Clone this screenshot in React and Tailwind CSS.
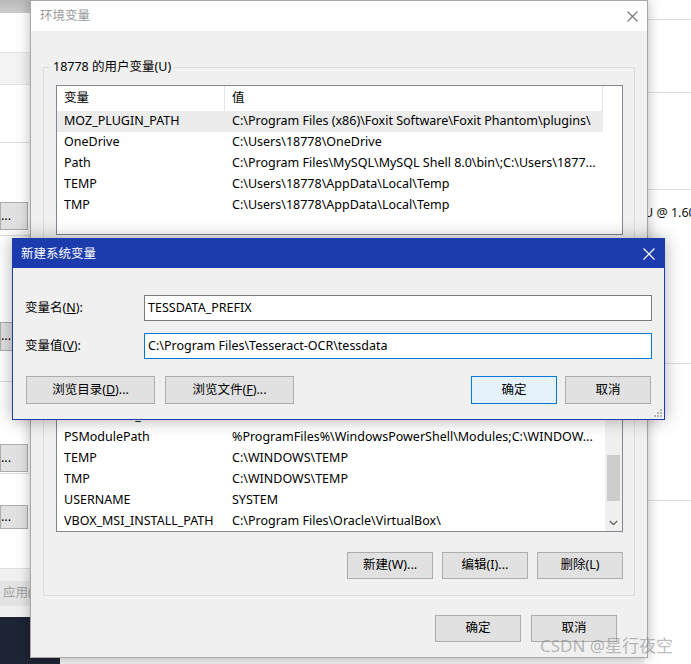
import React from "react";

function XIcon({ color, size = 11 }) {
  return (
    <svg width={size} height={size} viewBox="0 0 11 11">
      <path d="M0.5 0.5L10.5 10.5M10.5 0.5L0.5 10.5" stroke={color} strokeWidth="1.1" fill="none" />
    </svg>
  );
}

function Btn({ children, className = "" }) {
  return (
    <div
      className={
        "flex items-center justify-center border border-[#adadad] bg-[#e1e1e1] text-[12.5px] leading-none text-black " +
        className
      }
    >
      {children}
    </div>
  );
}

const userRows = [
  ["MOZ_PLUGIN_PATH", "C:\\Program Files (x86)\\Foxit Software\\Foxit Phantom\\plugins\\", true],
  ["OneDrive", "C:\\Users\\18778\\OneDrive", false],
  ["Path", "C:\\Program Files\\MySQL\\MySQL Shell 8.0\\bin\\;C:\\Users\\1877...", false],
  ["TEMP", "C:\\Users\\18778\\AppData\\Local\\Temp", false],
  ["TMP", "C:\\Users\\18778\\AppData\\Local\\Temp", false],
];

const sysRows = [
  ["PROCESSOR_ARCHITECTURE", "AMD64"],
  ["PROCESSOR_IDENTIFIER", "Intel64 Family 6 Model 142 Stepping 10, GenuineIntel"],
  ["PROCESSOR_LEVEL", "6"],
  ["PROCESSOR_REVISION", "8e0a"],
  ["PSModulePath", "%ProgramFiles%\\WindowsPowerShell\\Modules;C:\\WINDOW..."],
  ["TEMP", "C:\\WINDOWS\\TEMP"],
  ["TMP", "C:\\WINDOWS\\TEMP"],
  ["USERNAME", "SYSTEM"],
  ["VBOX_MSI_INSTALL_PATH", "C:\\Program Files\\Oracle\\VirtualBox\\"],
];

function ListHeader() {
  return (
    <div className="flex h-[25px] shrink-0 bg-white">
      <div className="flex w-[168px] items-center border-r border-[#e5e5e5] pl-[7px]">变量</div>
      <div className="flex w-[378px] items-center border-r border-[#e5e5e5] pl-[7px]">值</div>
    </div>
  );
}

function Row({ name, value, selected }) {
  return (
    <div className={"flex h-[21px] w-[546px] shrink-0 items-center whitespace-nowrap " + (selected ? "bg-[#ececec]" : "")}>
      <div className="w-[168px] shrink-0 overflow-hidden pl-[7px]">{name}</div>
      <div className="flex-1 overflow-hidden pl-[7px]">{value}</div>
    </div>
  );
}

export default function App() {
  return (
    <div className="relative h-[664px] w-[691px] overflow-hidden bg-white font-['Noto_Sans','Noto_Sans_CJK_SC',sans-serif] text-[12.5px] text-black">
      {/* desktop background windows */}
      <div className="flex h-full w-full">
        {/* left window (System Properties) */}
        <div className="flex h-full w-[60px] shrink-0 flex-col bg-white">
          <div className="h-[13px] shrink-0 bg-gradient-to-b from-[#b9b9b9] to-[#cdcdcd]" />
          <div className="h-[39px] shrink-0 bg-white" />
          <div className="h-[33px] shrink-0 border-y border-[#e4e4e4] bg-[#f3f3f3]" />
          <div className="h-[58px] shrink-0 border-b border-[#dddddd] bg-white" />
          <div className="h-[59px] shrink-0 bg-white" />
          <div className="flex h-[28px] w-[28px] shrink-0 items-center justify-end overflow-hidden whitespace-nowrap border border-[#adadad] bg-[#e1e1e1] pr-[16px]">
            设置(T)...
          </div>
          <div className="h-[6px] shrink-0 border-b border-[#dddddd]" />
          <div className="h-[86px] shrink-0 bg-white" />
          <div className="flex h-[29px] w-[28px] shrink-0 items-center justify-end overflow-hidden whitespace-nowrap border border-[#adadad] bg-[#e1e1e1] pr-[16px]">
            设置(S)...
          </div>
          <div className="h-[31px] shrink-0 border-b border-[#dddddd]" />
          <div className="h-[62px] shrink-0 bg-white" />
          <div className="flex h-[28px] w-[28px] shrink-0 items-center justify-end overflow-hidden whitespace-nowrap border border-[#adadad] bg-[#e1e1e1] pr-[16px]">
            设置(E)...
          </div>
          <div className="h-[2px] shrink-0 border-b border-[#dddddd]" />
          <div className="h-[31px] shrink-0 bg-white" />
          <div className="flex h-[24px] w-[28px] shrink-0 items-center justify-end overflow-hidden whitespace-nowrap border border-[#adadad] bg-[#e1e1e1] pr-[16px]">
            变量(N)...
          </div>
          <div className="h-[40px] shrink-0 border-b border-[#dddddd]" />
          <div className="h-[12px] shrink-0 bg-[#f0f0f0]" />
          <div className="flex h-[25px] shrink-0 items-center overflow-hidden whitespace-nowrap bg-[#e3e3e3] pl-[3px] text-[#a0a0a0]">
            应用(A)
          </div>
          <div className="h-[11px] shrink-0 bg-[#f0f0f0]" />
          <div className="flex-1 bg-[#1d2434]" />
        </div>
        {/* middle */}
        <div className="flex-1 bg-[#f3f3f3]" />
        {/* right window */}
        <div className="flex h-full w-[47px] shrink-0 flex-col bg-white">
          <div className="h-[20px] shrink-0 border-b border-[#dedede]" />
          <div className="h-[73px] shrink-0 border-b border-[#dedede]" />
          <div className="h-[97px] shrink-0 border-b border-[#dedede]" />
          <div className="h-[174px] shrink-0 whitespace-nowrap border-b border-[#dedede] pt-[14px] text-[12.5px] leading-[18px] text-[#111]">
            U @ 1.60GHz
          </div>
          <div className="h-[137px] shrink-0 border-b border-[#dedede]" />
          <div className="flex-1" />
        </div>
      </div>

      {/* main dialog: 环境变量 */}
      <div className="absolute left-[30px] top-0 flex h-[658px] w-[618px] flex-col border border-[#a7a7a7] bg-[#f0f0f0] shadow-[0_0_12px_rgba(0,0,0,0.28)]">
        <div className="flex h-[30px] shrink-0 items-center justify-between bg-white pl-[9px] pr-[9px]">
          <span className="text-[12.5px] text-[#9a9a9a]">环境变量</span>
          <XIcon color="#777777" />
        </div>
        <div className="flex flex-1 flex-col px-[12px] pt-[27px]">
          <fieldset className="border border-[#dcdcdc] pb-[11px] pl-[12px] pr-[11px]">
            <legend className="ml-[-6px] px-[3px] leading-[18px]">18778 的用户变量(U)</legend>
            <div className="mt-[9px] flex h-[150px] flex-col overflow-hidden border border-[#828790] bg-white">
              <ListHeader />
              {userRows.map(([n, v, s]) => (
                <Row key={n} name={n} value={v} selected={s} />
              ))}
            </div>
            <div className="mt-[16px] flex justify-end gap-[9px]">
              <Btn className="h-[27px] w-[86px]">新建(N)...</Btn>
              <Btn className="h-[27px] w-[86px]">编辑(E)...</Btn>
              <Btn className="h-[27px] w-[86px]">删除(D)</Btn>
            </div>
          </fieldset>
          <fieldset className="border border-[#dcdcdc] pb-[16px] pl-[12px] pr-[11px]">
            <legend className="ml-[-6px] px-[3px] leading-[18px]">系统变量(S)</legend>
            <div className="mt-[9px] flex h-[215px] overflow-hidden border border-[#828790] bg-white">
              <div className="flex flex-1 flex-col overflow-hidden">
                <ListHeader />
                {sysRows.map(([n, v]) => (
                  <Row key={n} name={n} value={v} selected={false} />
                ))}
              </div>
              <div className="flex w-[17px] shrink-0 flex-col bg-[#f0f0f0]">
                <div className="h-[17px] shrink-0" />
                <div className="h-[120px] shrink-0" />
                <div className="mx-[2px] h-[46px] shrink-0 bg-[#cdcdcd]" />
                <div className="flex-1" />
                <div className="flex h-[17px] shrink-0 items-center justify-center">
                  <svg width="9" height="6" viewBox="0 0 9 6">
                    <path d="M0.8 1L4.5 4.6L8.2 1" stroke="#606060" strokeWidth="1.3" fill="none" />
                  </svg>
                </div>
              </div>
            </div>
            <div className="mt-[20px] flex justify-end gap-[9px]">
              <Btn className="h-[27px] w-[86px]">新建(W)...</Btn>
              <Btn className="h-[27px] w-[86px]">编辑(I)...</Btn>
              <Btn className="h-[27px] w-[86px]">删除(L)</Btn>
            </div>
          </fieldset>
          <div className="mt-[19px] flex justify-end gap-[10px] pr-[18px]">
            <Btn className="h-[27px] w-[86px]">确定</Btn>
            <Btn className="h-[27px] w-[86px]">取消</Btn>
          </div>
        </div>
      </div>

      {/* new system variable dialog */}
      <div className="absolute left-[12px] top-[238px] flex h-[182px] w-[653px] flex-col border border-[#1c3cae] bg-[#f0f0f0] shadow-[0_0_16px_rgba(0,0,0,0.32)]">
        <div className="flex h-[29px] shrink-0 items-center justify-between bg-[#1c3cae] pl-[8px] pr-[9px]">
          <span className="pt-[1px] text-[12.5px] text-white">新建系统变量</span>
          <XIcon color="#ffffff" size={12} />
        </div>
        <div className="flex flex-1 flex-col pl-[12px] pr-[12px] pt-[27px]">
          <div className="flex h-[26px] items-center">
            <div className="w-[119px] shrink-0">
              变量名(<span className="underline">N</span>):
            </div>
            <div className="flex h-[26px] flex-1 items-center border border-[#7a7a7a] bg-white pl-[3px]">TESSDATA_PREFIX</div>
          </div>
          <div className="mt-[12px] flex h-[26px] items-center">
            <div className="w-[119px] shrink-0">
              变量值(<span className="underline">V</span>):
            </div>
            <div className="flex h-[26px] flex-1 items-center border border-[#0078d7] bg-white pl-[3px]">
              C:\Program Files\Tesseract-OCR\tessdata
            </div>
          </div>
          <div className="ml-[1px] mt-[17px] flex h-[28px] items-stretch">
            <Btn className="w-[129px]">
              浏览目录(<span className="underline">D</span>)...
            </Btn>
            <Btn className="ml-[10px] w-[129px]">
              浏览文件(<span className="underline">F</span>)...
            </Btn>
            <div className="flex-1" />
            <Btn className="w-[86px] !border-[#0078d7] !bg-[#e5f1fb]">确定</Btn>
            <Btn className="ml-[8px] mr-[1px] w-[86px]">取消</Btn>
          </div>
        </div>
        <svg className="absolute bottom-[2px] right-[2px]" width="8" height="8" viewBox="0 0 8 8">
          <rect x="6" y="0" width="2" height="2" fill="#b5b5b5" />
          <rect x="3" y="3" width="2" height="2" fill="#b5b5b5" />
          <rect x="6" y="3" width="2" height="2" fill="#b5b5b5" />
          <rect x="0" y="6" width="2" height="2" fill="#b5b5b5" />
          <rect x="3" y="6" width="2" height="2" fill="#b5b5b5" />
          <rect x="6" y="6" width="2" height="2" fill="#b5b5b5" />
        </svg>
      </div>

      {/* watermark */}
      <div className="pointer-events-none absolute left-[540px] top-[635px] whitespace-nowrap text-[17px] leading-[22px] text-[rgba(130,130,130,0.55)]">
        CSDN @星行夜空
      </div>
    </div>
  );
}
